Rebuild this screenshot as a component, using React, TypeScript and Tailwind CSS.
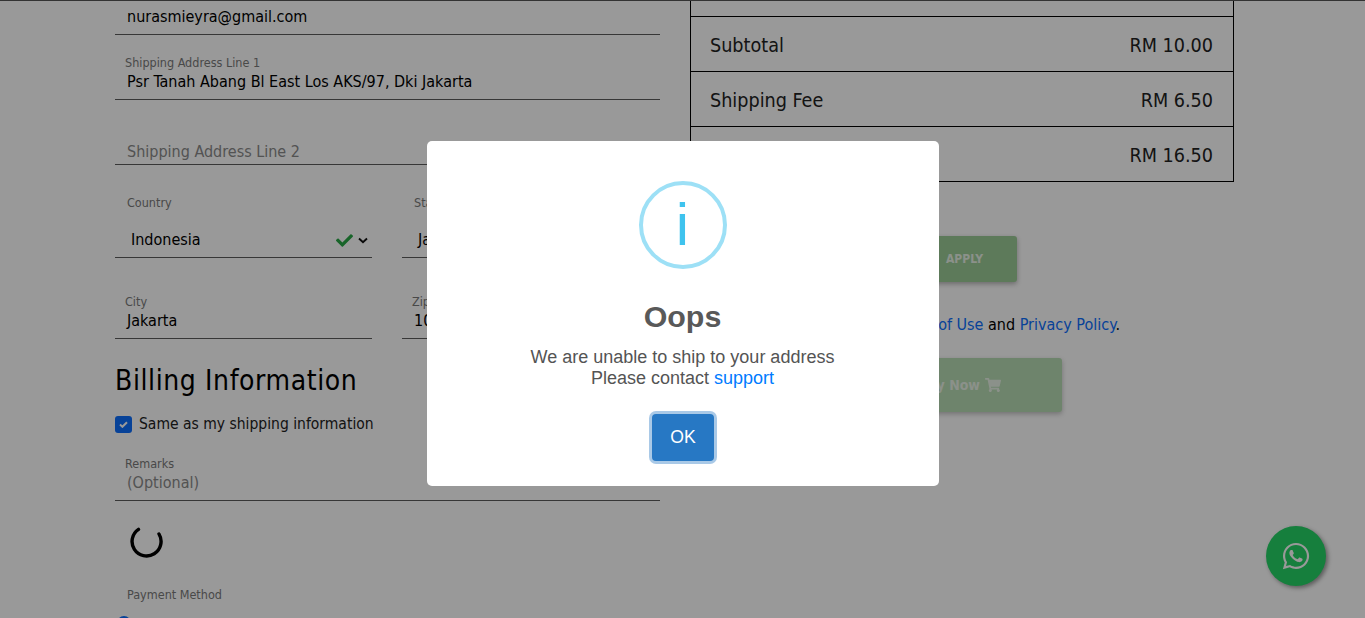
import { FaShoppingCart, FaWhatsapp, FaCheck } from "react-icons/fa";

const bodyFont = "font-['DejaVu_Sans_Condensed','DejaVu_Sans',sans-serif]";

function Field({ label, value, placeholder, className, valueClass }: any) {
  return (
    <div className={"flex flex-col justify-end border-b border-[#5c5c5c] " + className}>
      {label && <span className="mb-[2px] pl-[10px] text-[12.5px] leading-[14px] text-[#7a7a7a]">{label}</span>}
      <span className={"pl-[12px] text-[16px] leading-[20px] " + (valueClass || "pb-[7px] ") + (placeholder ? " text-[#8a8a8a]" : " text-black")}>
        {value || placeholder}
      </span>
    </div>
  );
}

function SummaryRow({ label, value }: any) {
  return (
    <div className="flex h-[55px] items-center justify-between border-b border-black pl-[19px] pr-[20px] pt-[4px] text-[19.6px] text-[#222]">
      <span>{label}</span>
      <span>{value}</span>
    </div>
  );
}

function Shipping() {
  return (
    <div className="w-[545px] shrink-0">
      <Field value="nurasmieyra@gmail.com" className="h-[34px]" />
      <Field label="Shipping Address Line 1" value="Psr Tanah Abang Bl East Los AKS/97, Dki Jakarta" className="h-[65px]" />
      <Field placeholder="Shipping Address Line 2" className="h-[65px]" valueClass="pb-[2px]" />

      <div className="mt-[31px] flex gap-[30px]">
        <div className="h-[62px] w-[257px] border-b border-[#5c5c5c]">
          <div className="pl-[12px] text-[12.5px] leading-[14px] text-[#7a7a7a]">Country</div>
          <div className="mt-[20px] flex items-center pl-[16px] pr-[4px] text-[16px] leading-[20px] text-black">
            <span className="mr-auto">Indonesia</span>
            <FaCheck className="mr-[5px] text-[17px] text-[#28a745]" />
            <svg width="10" height="7" viewBox="0 0 10 7">
              <path d="M1 1.5 L5 5.2 L9 1.5" fill="none" stroke="#111" strokeWidth="1.9" />
            </svg>
          </div>
        </div>
        <div className="h-[62px] w-[258px] border-b border-[#5c5c5c]">
          <div className="pl-[12px] text-[12.5px] leading-[14px] text-[#7a7a7a]">State</div>
          <div className="mt-[20px] pl-[16px] text-[16px] leading-[20px] text-black">Jakarta</div>
        </div>
      </div>

      <div className="mt-[34px] flex gap-[30px]">
        <Field label="City" value="Jakarta" className="h-[47px] w-[257px]" />
        <Field label="Zip" value="10110" className="h-[47px] w-[258px]" />
      </div>

      <h2 className="mt-[22px] text-[28px] leading-[40px] tracking-[0.6px] text-black">Billing Information</h2>

      <label className="mt-[14px] flex h-[20px] items-center gap-[7px] text-[15.5px] text-[#222]">
        <span className="-mt-px flex h-[17px] w-[17px] items-center justify-center rounded-[3px] bg-[#0d6efd]">
          <svg width="9" height="7" viewBox="0 0 9 7">
            <path d="M1 3.6 L3.4 5.8 L8 1.2" fill="none" stroke="#fff" strokeWidth="2" />
          </svg>
        </span>
        Same as my shipping information
      </label>

      <Field label="Remarks" placeholder="(Optional)" className="mt-[10px] h-[56px]" />

      {/* spinner */}
      <div className="ml-[15px] mt-[24px] h-[33px] w-[33px]">
        <svg viewBox="0 0 33 33" width="33" height="33">
          <path d="M8.5 4.4 A14.5 14.5 0 1 0 29 9" fill="none" stroke="#000" strokeWidth="3.4" strokeLinecap="round" />
        </svg>
      </div>

      <div className="mt-[29px] pl-[12px] text-[12.5px] leading-[16px] text-[#7a7a7a]">Payment Method</div>
      <div className="ml-[2px] mt-[13px] h-[14px] w-[14px] rounded-full bg-[#0d6efd]" />
    </div>
  );
}

function Summary() {
  return (
    <div className="w-[544px] shrink-0">
      <div className="border-b border-l border-r border-black">
        <div className="h-[16px] border-b border-black" />
        <SummaryRow label="Subtotal" value="RM 10.00" />
        <SummaryRow label="Shipping Fee" value="RM 6.50" />
        <div className="-mb-px">
          <SummaryRow label="Total" value="RM 16.50" />
        </div>
      </div>

      <div className="mt-[54px] flex justify-end pr-[217px]">
        <button className="h-[46px] w-[120px] rounded-[3px] bg-[#9ccb96] pl-[15px] text-center text-[12px] font-bold text-[#e8f2e6] shadow-[0_2px_5px_rgba(0,0,0,0.3)]">
          APPLY
        </button>
      </div>

      <p className="mt-[33px] pr-[114px] text-right text-[16px] leading-[20px] text-black">
        I agree to the <a className="text-[#0d6efd]">Terms of Use</a> and <a className="text-[#0d6efd]">Privacy Policy</a>.
      </p>

      <div className="mt-[23px] flex justify-end pr-[172px]">
        <button className="flex h-[54px] w-[200px] items-center justify-end gap-[5px] rounded-[3px] bg-[#b8dcb4] pr-[61px] text-[14px] font-bold text-[#e8f2e6] shadow-[0_2px_5px_rgba(0,0,0,0.25)]">
          Buy Now <FaShoppingCart className="text-[16px]" />
        </button>
      </div>
    </div>
  );
}

function OopsModal() {
  return (
    <div className="fixed inset-0 flex items-start justify-center bg-black/40 pt-[141px]">
      <div className="flex h-[345px] w-[512px] flex-col items-center rounded-[5px] bg-white font-['Liberation_Sans',Arial,sans-serif]">
        <div className="mt-[40px] flex h-[88px] w-[88px] items-center justify-center rounded-full border-[4px] border-[#9de0f6] text-[60px] leading-none text-[#3fc3ee]">
          i
        </div>
        <h2 className="mt-[29px] text-[30.4px] font-bold leading-[36px] text-[#595959]">Oops</h2>
        <div className="mt-[13px] text-center text-[18px] leading-[21px] text-[#545454]">
          We are unable to ship to your address
          <br />
          Please contact <a className="text-[#007bff]">support</a>
        </div>
        <button className="mt-[25px] h-[47px] w-[62px] rounded-[4px] bg-[#2778c4] pl-px text-[17.6px] text-white shadow-[0_0_0_3px_rgba(39,120,196,0.4)]">
          OK
        </button>
      </div>
    </div>
  );
}

export default function App() {
  return (
    <div className={"h-[618px] overflow-hidden bg-white " + bodyFont}>
      <div className="h-px bg-[#555]" />
      <div className="flex gap-[30px] pl-[115px]">
        <Shipping />
        <Summary />
      </div>
      <OopsModal />
      <a className="fixed bottom-[32px] right-[39px] flex h-[60px] w-[60px] items-center justify-center rounded-full bg-[#167f3d] text-[30px] text-[#999] shadow-[2px_2px_4px_rgba(0,0,0,0.4)]">
        <FaWhatsapp />
      </a>
    </div>
  );
}
